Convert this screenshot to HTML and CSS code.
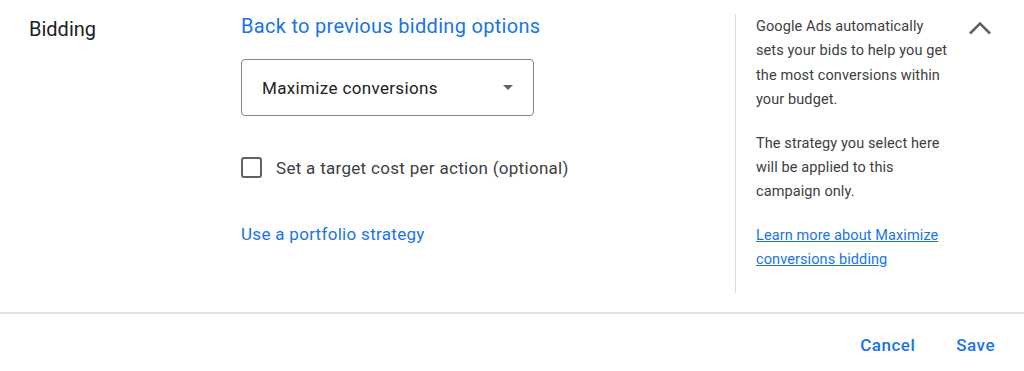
FILE: index.html
```html
<!DOCTYPE html>
<html lang="en">
<head>
  <meta charset="UTF-8">
  <meta name="viewport" content="width=device-width, initial-scale=1.0">
  <title>Bidding</title>
  <link rel="stylesheet" href="styles.css">
</head>
<body>
  <div class="panel">
    <div class="section">
      <div class="section-title">Bidding</div>

      <div class="section-body">
        <a class="back-link" href="#">Back to previous bidding options</a>

        <div class="select-box">
          <span>Maximize conversions</span>
          <span class="select-arrow"></span>
        </div>

        <label class="check-row">
          <span class="checkbox"></span>
          <span>Set a target cost per action (optional)</span>
        </label>

        <a class="portfolio-link" href="#">Use a portfolio strategy</a>
      </div>

      <div class="help">
        <div class="help-text">
          <p>Google Ads automatically sets your bids to help you get the most conversions within your budget.</p>
          <p>The strategy you select here will be applied to this campaign only.</p>
          <p><a href="#">Learn more about Maximize conversions bidding</a></p>
        </div>
        <!-- collapse chevron -->
        <svg class="chevron" width="24" height="24" viewBox="0 0 24 24">
          <path d="M2 17.5 L12 7.5 L22 17.5" fill="none" stroke="#5f6368" stroke-width="2.5"/>
        </svg>
      </div>
    </div>

    <div class="actions">
      <a class="action-btn" href="#">Cancel</a>
      <a class="action-btn" href="#">Save</a>
    </div>
  </div>
</body>
</html>
```

FILE: styles.css
```css
body {
  margin: 0;
  background: #fff;
  font-family: Roboto, "Liberation Sans", sans-serif;
  color: #3c4043;
}

a {
  color: #1a73e8;
  text-decoration: none;
}

.section {
  display: flex;
  height: 314px;
  padding-left: 29px;
  box-sizing: border-box;
  border-bottom: 2px solid #e3e3e3;
}

.section-title {
  width: 212px;
  padding-top: 17px;
  font-size: 20px;
  color: #202124;
}

.section-body {
  flex: 1;
  display: flex;
  flex-direction: column;
  align-items: flex-start;
  padding-top: 14px;
}

.back-link {
  font-size: 20px;
  line-height: 24px;
  letter-spacing: 0.3px;
}

.select-box {
  margin-top: 21px;
  width: 293px;
  height: 57px;
  box-sizing: border-box;
  border: 1px solid #80868b;
  border-radius: 4px;
  display: flex;
  align-items: center;
  justify-content: space-between;
  padding: 0 20px 0 20px;
  font-size: 17px;
  letter-spacing: 0.35px;
  color: #202124;
}

.select-arrow {
  width: 0;
  height: 0;
  border-left: 5px solid transparent;
  border-right: 5px solid transparent;
  border-top: 5px solid #5f6368;
}

.check-row {
  margin-top: 41px;
  display: flex;
  align-items: center;
  gap: 14px;
  font-size: 17px;
  letter-spacing: 0.3px;
  color: #3c4043;
}

.checkbox {
  width: 21px;
  height: 21px;
  box-sizing: border-box;
  border: 2px solid #5f6368;
  border-radius: 3px;
}

.portfolio-link {
  margin-top: 46px;
  font-size: 17px;
  letter-spacing: 0.3px;
}

.help {
  width: 289px;
  box-sizing: border-box;
  margin-top: 14px;
  height: 279px;
  border-left: 1px solid #dadce0;
  display: flex;
  padding: 0 32px 0 20px;
}

.help-text {
  width: 196px;
  font-size: 14.5px;
  line-height: 24.4px;
  letter-spacing: 0.1px;
  color: #3c4043;
}

.help-text p {
  margin: 1px 0 19px;
}

.help-text a {
  text-decoration: underline;
}

.chevron {
  margin-left: auto;
  margin-top: 2px;
}

.actions {
  display: flex;
  justify-content: flex-end;
  gap: 41px;
  padding: 20px 29px 0 0;
}

.action-btn {
  font-size: 17px;
  font-weight: 500;
  line-height: 22px;
  letter-spacing: 0.5px;
}
```
